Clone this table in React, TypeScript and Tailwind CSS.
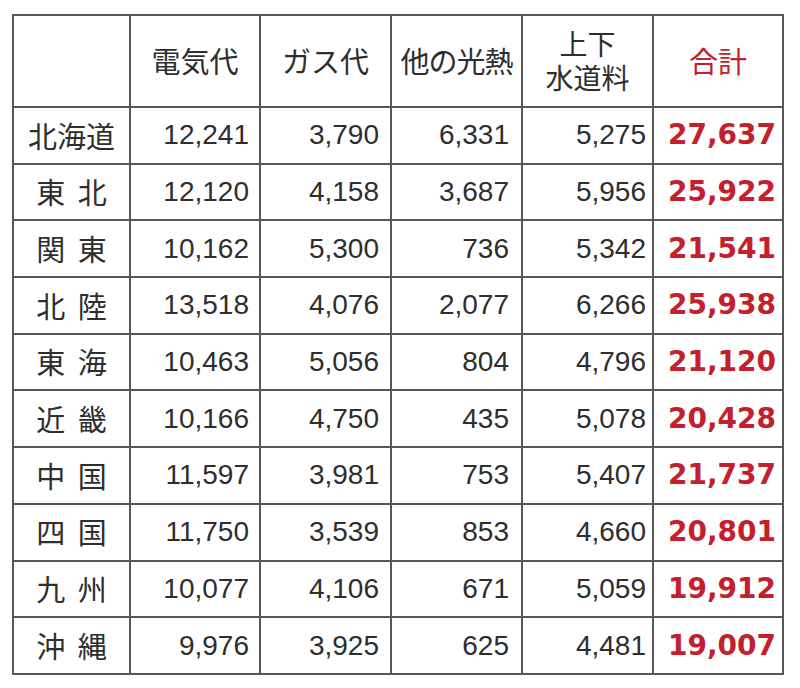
import React from 'react';

type Row = {
  region: string;
  denki: string;
  gas: string;
  other: string;
  water: string;
  total: string;
};

const rows: Row[] = [
  { region: '北海道', denki: '12,241', gas: '3,790', other: '6,331', water: '5,275', total: '27,637' },
  { region: '東 北', denki: '12,120', gas: '4,158', other: '3,687', water: '5,956', total: '25,922' },
  { region: '関 東', denki: '10,162', gas: '5,300', other: '736', water: '5,342', total: '21,541' },
  { region: '北 陸', denki: '13,518', gas: '4,076', other: '2,077', water: '6,266', total: '25,938' },
  { region: '東 海', denki: '10,463', gas: '5,056', other: '804', water: '4,796', total: '21,120' },
  { region: '近 畿', denki: '10,166', gas: '4,750', other: '435', water: '5,078', total: '20,428' },
  { region: '中 国', denki: '11,597', gas: '3,981', other: '753', water: '5,407', total: '21,737' },
  { region: '四 国', denki: '11,750', gas: '3,539', other: '853', water: '4,660', total: '20,801' },
  { region: '九 州', denki: '10,077', gas: '4,106', other: '671', water: '5,059', total: '19,912' },
  { region: '沖 縄', denki: '9,976', gas: '3,925', other: '625', water: '4,481', total: '19,007' },
];

const jp = "font-['Noto_Sans_CJK_JP',sans-serif]";
const cell = 'border-2 border-[#575757] p-0';

export default function App() {
  return (
    <div className="w-[800px] h-[688px] bg-white pt-[14px] pl-[12px]">
      <table className="table-fixed border-collapse text-[#2e2e2e]">
        <colgroup>
          <col className="w-[117px]" />
          <col className="w-[130px]" />
          <col className="w-[131px]" />
          <col className="w-[131px]" />
          <col className="w-[131px]" />
          <col className="w-[130px]" />
        </colgroup>
        <thead>
          <tr className="h-[92px]">
            <th className={cell}></th>
            <th className={`${cell} ${jp} text-[29px] font-normal text-center`}>電気代</th>
            <th className={`${cell} ${jp} text-[29px] font-normal text-center`}>ガス代</th>
            <th className={`${cell} ${jp} text-[29px] font-normal text-center whitespace-nowrap overflow-hidden tracking-[-1px]`}>
              他の光熱
            </th>
            <th className={`${cell} font-['Liberation_Sans','Noto_Sans_CJK_JP',sans-serif] text-[28px] font-normal text-center`}>
              <div className="pt-[4px] leading-[34px]">上下</div>
              <div className="leading-[34px]">水道料</div>
            </th>
            <th className={`${cell} ${jp} text-[29px] font-normal text-center text-[#c4202c]`}>合計</th>
          </tr>
        </thead>
        <tbody>
          {rows.map((r) => (
            <tr key={r.region} className="h-[56.7px]">
              <td className={`${cell} ${jp} text-[29px] text-center whitespace-pre [word-spacing:6px]`}>{r.region}</td>
              <td className={`${cell} font-['Liberation_Sans',sans-serif] text-[28px] text-right pr-[10px]`}>{r.denki}</td>
              <td className={`${cell} font-['Liberation_Sans',sans-serif] text-[28px] text-right pr-[11px]`}>{r.gas}</td>
              <td className={`${cell} font-['Liberation_Sans',sans-serif] text-[28px] text-right pr-[12px]`}>{r.other}</td>
              <td className={`${cell} font-['Liberation_Sans',sans-serif] text-[28px] text-right pr-[6px]`}>{r.water}</td>
              <td className={`${cell} font-['DejaVu_Sans',sans-serif] font-bold text-[28px] text-right pr-[6px] text-[#c4202c]`}>
                {r.total}
              </td>
            </tr>
          ))}
        </tbody>
      </table>
    </div>
  );
}
